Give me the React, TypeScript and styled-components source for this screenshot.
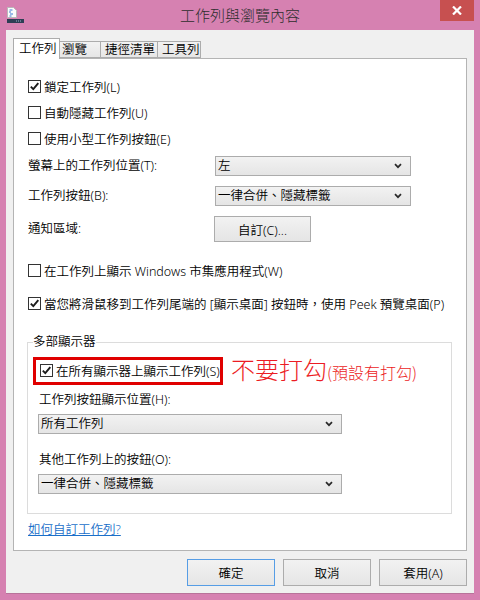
import styled, { createGlobalStyle } from 'styled-components';

const UI_FONT = '"Noto Sans", "Noto Sans CJK TC", sans-serif';

const GlobalStyle = createGlobalStyle`
  html, body {
    margin: 0;
    padding: 0;
    background: #d681b1;
  }
  * {
    box-sizing: border-box;
  }
`;

// 작업표시줄 속성 창 (Windows 8 스타일) — 분홍 테두리 + 회색 클라이언트 영역.
export default function App() {
  return (
    <>
      <GlobalStyle />
      <Window>
        <TitleBar>
          <AppIcon />
          <Title>工作列與瀏覽內容</Title>
          <CloseButton type="button" aria-label="關閉">
            <svg width="10" height="9" viewBox="0 0 10 9">
              <path d="M1 0.5 L9 8.5 M9 0.5 L1 8.5" stroke="#fff" strokeWidth="2.2" />
            </svg>
          </CloseButton>
        </TitleBar>

        <Client>
          <Tabs>
            <Tab $active $width={47}>工作列</Tab>
            <Tab $width={42} $pad={2}>瀏覽</Tab>
            <Tab $width={58}>捷徑清單</Tab>
            <Tab $width={44}>工具列</Tab>
          </Tabs>

          <Panel>
            <CheckRow>
              <Check checked />
              <span>鎖定工作列(L)</span>
            </CheckRow>
            <CheckRow>
              <Check />
              <span>自動隱藏工作列(U)</span>
            </CheckRow>
            <CheckRow>
              <Check />
              <span>使用小型工作列按鈕(E)</span>
            </CheckRow>

            <FieldGrid>
              <FieldLabel>螢幕上的工作列位置(T):</FieldLabel>
              <Select $width={196}>左</Select>
              <FieldLabel>工作列按鈕(B):</FieldLabel>
              <Select $width={196}>一律合併、隱藏標籤</Select>
              <FieldLabel>通知區域:</FieldLabel>
              <PushButton type="button">自訂(C)...</PushButton>
            </FieldGrid>

            <CheckRow $gap={15}>
              <Check />
              <span>在工作列上顯示 Windows 市集應用程式(W)</span>
            </CheckRow>
            <CheckRow $gap={7}>
              <Check checked />
              <span>當您將滑鼠移到工作列尾端的 [顯示桌面] 按鈕時，使用 Peek 預覽桌面(P)</span>
            </CheckRow>

            <Group>
              <Legend>多部顯示器</Legend>
              <HighlightRow>
                <Highlight>
                  <Check checked />
                  <span>在所有顯示器上顯示工作列(S)</span>
                </Highlight>
                <Note>
                  不要打勾<NoteSmall>(預設有打勾)</NoteSmall>
                </Note>
              </HighlightRow>
              <GroupLabel $gap={4}>工作列按鈕顯示位置(H):</GroupLabel>
              <GroupSelect $width={304}>所有工作列</GroupSelect>
              <GroupLabel $gap={16}>其他工作列上的按鈕(O):</GroupLabel>
              <GroupSelect $width={304}>一律合併、隱藏標籤</GroupSelect>
            </Group>

            <HelpLink href="#">如何自訂工作列?</HelpLink>
          </Panel>

          <ButtonBar>
            <DialogButton type="button" $default>確定</DialogButton>
            <DialogButton type="button">取消</DialogButton>
            <DialogButton type="button">套用(A)</DialogButton>
          </ButtonBar>
        </Client>
      </Window>
    </>
  );
}

function Check({ checked = false }: { checked?: boolean }) {
  return (
    <CheckBox>
      {checked && (
        <svg width="11" height="11" viewBox="0 0 11 11">
          <path d="M1.8 5.6 L4.3 8.2 L9.3 2.2" fill="none" stroke="#1c1c1c" strokeWidth="1.9" />
        </svg>
      )}
    </CheckBox>
  );
}

function Select({ children, $width }: { children: React.ReactNode; $width: number }) {
  return (
    <SelectBox $width={$width}>
      <SelectText>{children}</SelectText>
      <Chevron />
    </SelectBox>
  );
}

function GroupSelect(props: { children: React.ReactNode; $width: number }) {
  return (
    <GroupSelectWrap>
      <Select {...props} />
    </GroupSelectWrap>
  );
}

function Chevron() {
  return (
    <svg width="8" height="6" viewBox="0 0 8 6">
      <path d="M1 1.2 L4 4.2 L7 1.2" fill="none" stroke="#2a2a2a" strokeWidth="1.7" />
    </svg>
  );
}

// 제목표시줄 왼쪽 아이콘: 종이 + 아래 어두운 작업표시줄 띠.
function AppIcon() {
  return (
    <IconWrap>
      <svg width="18" height="17" viewBox="0 0 18 17">
        <path d="M0.5 0.5 H6.5 L9.5 3.5 V10.5 H0.5 Z" fill="#fbfbfb" stroke="#b9b9b9" />
        <path d="M2.5 3 h3 M2 5 h2 M3 7 h3 M2.5 9 h2" stroke="#3a7bd5" strokeWidth="1" />
        <rect x="0" y="12" width="17" height="4" fill="#2e3e55" />
        <path d="M9 14 h1 M11 14 h1 M13 14 h1" stroke="#9fb3cc" strokeWidth="1" />
      </svg>
    </IconWrap>
  );
}

const Window = styled.div`
  display: flex;
  flex-direction: column;
  width: 480px;
  height: 600px;
  padding: 0 6px 6px;
  background: #d681b1;
  font-family: ${UI_FONT};
  font-size: 12.5px;
  font-weight: 350;
  color: #000;
`;

const TitleBar = styled.div`
  display: grid;
  grid-template-columns: 34px 1fr 34px;
  align-items: start;
  height: 30px;
`;

const IconWrap = styled.div`
  display: flex;
  margin: 7px 0 0 1px;
`;

const Title = styled.div`
  padding-top: 5px;
  text-align: center;
  font-family: "Noto Sans CJK TC", sans-serif;
  font-size: 15px;
  font-weight: 300;
  line-height: 20px;
  color: #2e2e2e;
`;

const CloseButton = styled.button`
  display: flex;
  align-items: center;
  justify-content: center;
  width: 34px;
  height: 21px;
  padding: 0;
  border: none;
  background: #c75050;
`;

const Client = styled.div`
  flex: 1;
  display: flex;
  flex-direction: column;
  padding: 8px 7px 0 7px;
  background: #f0f0f0;
  border-bottom: 1px solid #b8739a;
`;

const Tabs = styled.div`
  display: flex;
  align-items: flex-end;
  height: 20px;
  position: relative;
  z-index: 1;
`;

// 선택된 탭은 흰 바탕에 조금 더 높고, 패널 위 테두리를 덮는다.
const Tab = styled.div<{ $active?: boolean; $width: number; $pad?: number }>`
  width: ${({ $width }) => $width}px;
  height: ${({ $active }) => ($active ? 21 : 17)}px;
  margin-bottom: ${({ $active }) => ($active ? -1 : 0)}px;
  padding-left: ${({ $pad, $active }) => $pad ?? ($active ? 5 : 4)}px;
  border: 1px solid #acacac;
  border-bottom: ${({ $active }) => ($active ? 'none' : '1px solid #acacac')};
  background: ${({ $active }) =>
    $active ? '#fff' : 'linear-gradient(#f2f2f2, #e6e6e6)'};
  font-size: 12.5px;
  line-height: ${({ $active }) => ($active ? 19 : 15)}px;
  white-space: nowrap;

  & + & {
    margin-left: -1px;
  }
`;

const Panel = styled.div`
  display: flex;
  flex-direction: column;
  height: 493px;
  padding: 14px 0 0 14px;
  background: #fff;
  border: 1px solid #b4b4b4;
`;

const CheckRow = styled.label<{ $gap?: number }>`
  display: flex;
  align-items: center;
  gap: 3px;
  height: 26px;
  margin-top: ${({ $gap }) => $gap ?? 0}px;
  white-space: nowrap;
`;

const CheckBox = styled.span`
  display: flex;
  align-items: center;
  justify-content: center;
  flex-shrink: 0;
  width: 13px;
  height: 13px;
  border: 1px solid #333;
  background: #fff;
`;

const FieldGrid = styled.div`
  display: grid;
  grid-template-columns: 187px auto;
  grid-template-rows: 20px 20px 26px;
  row-gap: 10px;
  align-items: center;
  justify-items: start;
  margin-top: 5px;
`;

const FieldLabel = styled.span`
  line-height: 20px;
  white-space: nowrap;
`;

const SelectBox = styled.div<{ $width: number }>`
  display: flex;
  align-items: center;
  justify-content: space-between;
  width: ${({ $width }) => $width}px;
  height: 20px;
  padding: 0 8px 0 2px;
  border: 1px solid #acacac;
  background: linear-gradient(#f2f2f2, #e5e5e5);
`;

const SelectText = styled.span`
  line-height: 18px;
  white-space: nowrap;
`;

const PushButton = styled.button`
  width: 97px;
  height: 26px;
  margin-left: -1px;
  padding: 0;
  border: 1px solid #acacac;
  background: linear-gradient(#f2f2f2, #e5e5e5);
  font-family: ${UI_FONT};
  font-size: 12.5px;
  font-weight: 350;
  color: #000;
`;

const Group = styled.fieldset`
  width: 425px;
  margin: 18px 0 0 -1px;
  padding: 0 5px 19px;
  border: 1px solid #dcdcdc;
`;

const Legend = styled.legend`
  padding: 0;
  line-height: 16px;
`;

const HighlightRow = styled.div`
  display: flex;
  align-items: center;
  gap: 8px;
  margin-top: 5px;
`;

// 빨간 강조 상자(주석용).
const Highlight = styled.label`
  display: flex;
  align-items: center;
  gap: 3px;
  width: 190px;
  height: 28px;
  padding-left: 4px;
  border: 3px solid #e00000;
  white-space: nowrap;
`;

const Note = styled.span`
  display: flex;
  align-items: baseline;
  font-family: "Noto Sans CJK TC", sans-serif;
  font-size: 24px;
  font-weight: 300;
  line-height: 28px;
  color: #ec1c24;
  white-space: nowrap;
`;

const NoteSmall = styled.span`
  font-size: 16px;
`;

const GroupLabel = styled.div<{ $gap: number }>`
  margin: ${({ $gap }) => $gap}px 0 0 6px;
  line-height: 20px;
  white-space: nowrap;
`;

const GroupSelectWrap = styled.div`
  margin: 4px 0 0 5px;
`;

const HelpLink = styled.a`
  align-self: flex-start;
  margin-top: 8px;
  line-height: 16px;
  color: #1a6fc9;
  text-decoration: underline;
`;

const ButtonBar = styled.div`
  display: flex;
  justify-content: flex-end;
  gap: 8px;
  margin-top: 8px;
`;

const DialogButton = styled.button<{ $default?: boolean }>`
  width: 88px;
  height: 27px;
  padding: 0;
  border: 1px solid ${({ $default }) => ($default ? '#569de5' : '#acacac')};
  background: linear-gradient(#f2f2f2, #e5e5e5);
  font-family: ${UI_FONT};
  font-size: 12.5px;
  font-weight: 350;
  color: #000;
`;
